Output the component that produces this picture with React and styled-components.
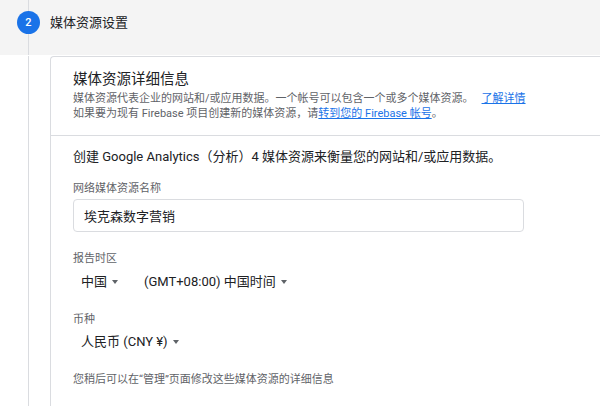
import styled, { createGlobalStyle } from "styled-components";

const Global = createGlobalStyle`
  html, body {
    margin: 0;
    padding: 0;
    background: #fff;
  }
  body {
    font-family: Roboto, "Noto Sans CJK SC", "Liberation Sans", sans-serif;
    color: #202124;
    overflow: hidden;
  }
`;

const Step = styled.div`
  width: 600px;
  height: 406px;
  display: flex;
  flex-direction: column;
`;

const StepHead = styled.div`
  height: 55px;
  flex-shrink: 0;
  display: flex;
  align-items: flex-start;
  background: #f4f4f4;
`;

const Marker = styled.div`
  align-self: stretch;
  width: 23px;
  margin-left: 17px;
  display: flex;
  flex-direction: column;
  align-items: center;
  &::before,
  &::after {
    content: "";
    width: 1px;
    background: #dadce0;
  }
  &::before {
    height: 11px;
  }
  &::after {
    flex: 1;
  }
`;

const Badge = styled.div`
  width: 23px;
  height: 23px;
  border-radius: 50%;
  background: #1a73e8;
  color: #fff;
  font-size: 11px;
  font-weight: 500;
  display: flex;
  align-items: center;
  justify-content: center;
`;

const StepTitle = styled.div`
  margin: 14px 0 0 10px;
  font-size: 13px;
  line-height: 17px;
  color: #202124;
`;

const StepBody = styled.div`
  flex: 1;
  display: flex;
  padding-top: 1px;
  min-height: 0;
`;

const Rail = styled.div`
  width: 50px;
  flex-shrink: 0;
  display: flex;
  &::before {
    content: "";
    width: 1px;
    margin-left: 28px;
    background: #dadce0;
  }
`;

const Card = styled.div`
  flex: 1;
  border-left: 1px solid #dadce0;
  border-top: 1px solid #dadce0;
  border-top-left-radius: 4px;
  background: #fff;
`;

const Section = styled.div`
  padding: ${(p) => p.$pad};
  border-bottom: ${(p) => (p.$divider ? "1px solid #dadce0" : "none")};
`;

const CardTitle = styled.div`
  font-size: 14.5px;
  line-height: 20px;
  color: #202124;
`;

const Desc = styled.div`
  font-size: 11px;
  line-height: 15px;
  color: #5f6368;
  white-space: nowrap;
  margin-top: ${(p) => p.$top || 0}px;
`;

const Link = styled.a`
  color: #1a73e8;
  text-decoration: underline;
  margin-left: ${(p) => p.$gap || 0}px;
`;

const Lead = styled.div`
  font-size: 13px;
  line-height: 18px;
  color: #202124;
  white-space: nowrap;
`;

const Label = styled.div`
  font-size: 11px;
  line-height: 15px;
  color: #5f6368;
  margin-top: ${(p) => p.$top}px;
`;

const Input = styled.div`
  margin-top: 3px;
  width: 451px;
  height: 33px;
  box-sizing: border-box;
  border: 1px solid #dadce0;
  border-radius: 4px;
  padding: 0 10px;
  display: flex;
  align-items: center;
  font-size: 13px;
  color: #202124;
`;

const SelectRow = styled.div`
  display: flex;
  gap: 10px;
  margin-top: ${(p) => p.$top}px;
`;

const Select = styled.div`
  display: inline-flex;
  align-items: center;
  gap: 5px;
  padding: 0 8px;
  font-size: 13px;
  line-height: 18px;
  color: #202124;
  white-space: nowrap;
  &::after {
    content: "";
    border-left: 3.5px solid transparent;
    border-right: 3.5px solid transparent;
    border-top: 4px solid #5f6368;
  }
`;

const Note = styled.div`
  margin-top: 21px;
  font-size: 11px;
  line-height: 15px;
  color: #5f6368;
  white-space: nowrap;
`;

export default function App() {
  return (
    <>
      <Global />
      <Step>
        <StepHead>
          <Marker>
            <Badge>2</Badge>
          </Marker>
          <StepTitle>媒体资源设置</StepTitle>
        </StepHead>
        <StepBody>
          <Rail />
          <Card>
            <Section $pad="13px 22px 14px" $divider>
              <CardTitle>媒体资源详细信息</CardTitle>
              <Desc $top={1}>
                媒体资源代表企业的网站和/或应用数据。一个帐号可以包含一个或多个媒体资源。
                <Link $gap={8}>了解详情</Link>
              </Desc>
              <Desc>
                如果要为现有 Firebase 项目创建新的媒体资源，请
                <Link>转到您的 Firebase 帐号</Link>。
              </Desc>
            </Section>
            <Section $pad="12px 22px 0">
              <Lead>
                创建 Google Analytics（分析）4 媒体资源来衡量您的网站和/或应用数据。
              </Lead>
              <Label $top={15}>网络媒体资源名称</Label>
              <Input>埃克森数字营销</Input>
              <Label $top={19}>报告时区</Label>
              <SelectRow $top={7}>
                <Select>中国</Select>
                <Select>(GMT+08:00) 中国时间</Select>
              </SelectRow>
              <Label $top={21}>币种</Label>
              <SelectRow $top={6}>
                <Select>人民币 (CNY ¥)</Select>
              </SelectRow>
              <Note>您稍后可以在“管理”页面修改这些媒体资源的详细信息</Note>
            </Section>
          </Card>
        </StepBody>
      </Step>
    </>
  );
}
